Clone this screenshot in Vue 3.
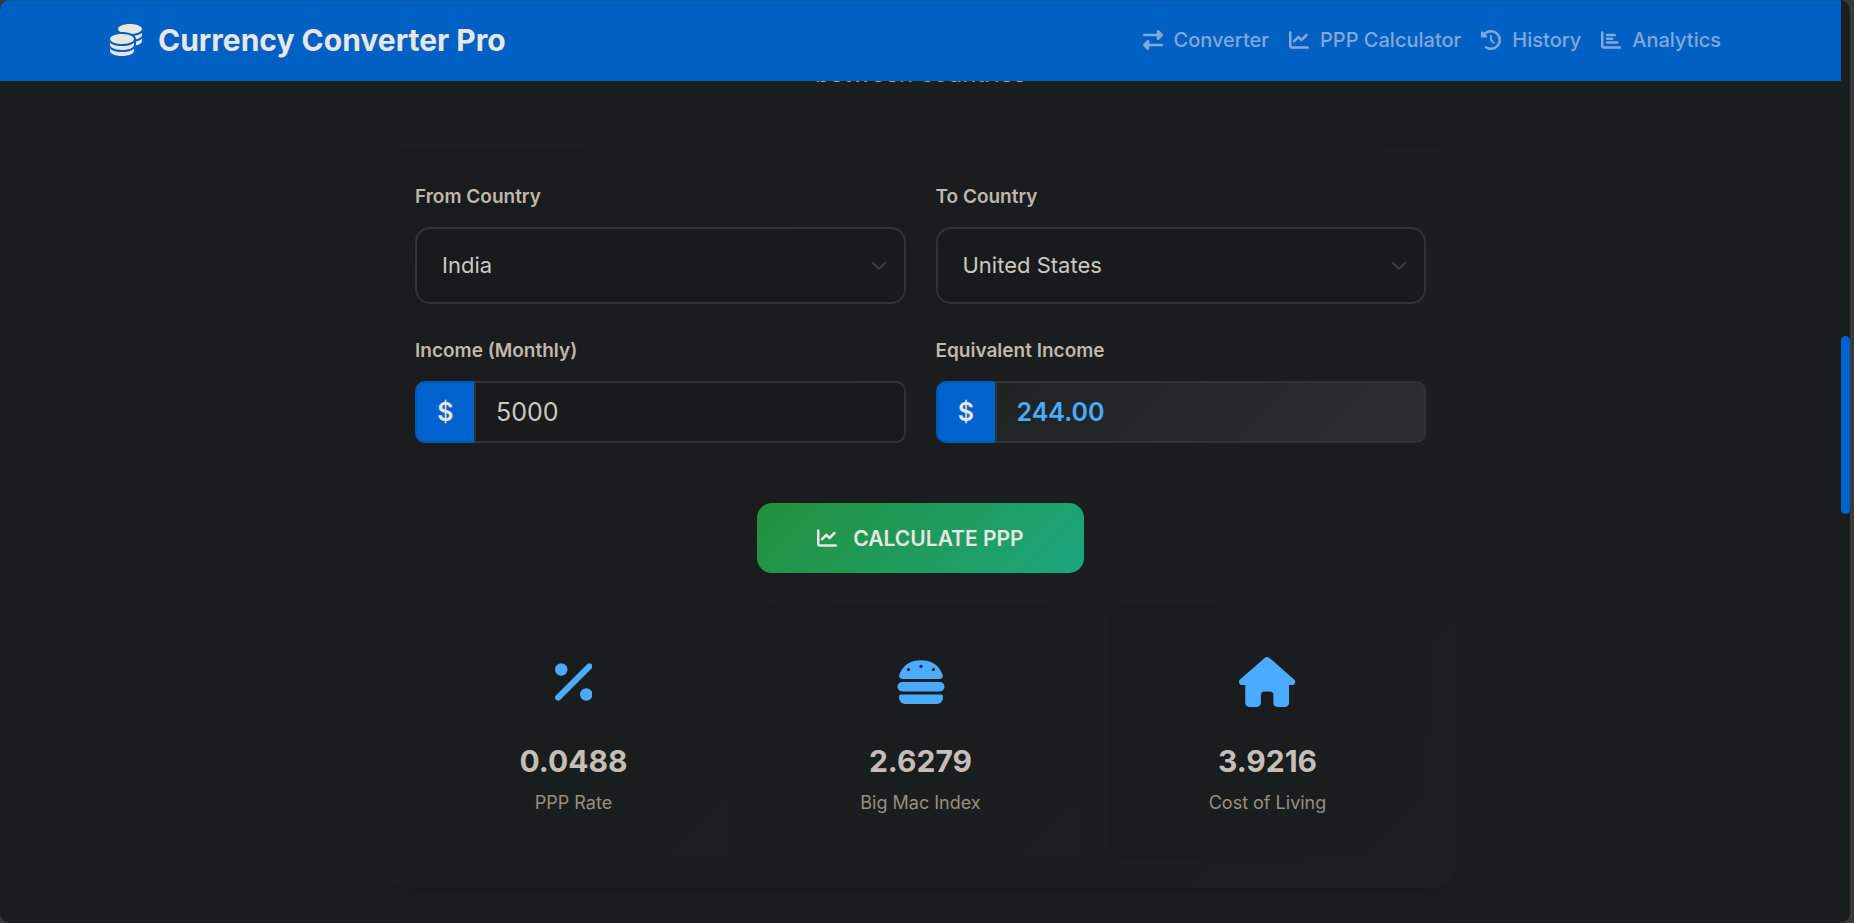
<script setup>
import { ref } from 'vue'

const icons = {
  coins: { box: '0 0 512 512', d: 'M512 80c0 18-14.3 34.6-38.4 48c-29.1 16.1-72.5 27.5-122.3 30.9c-3.7-1.8-7.4-3.5-11.3-5C300.6 137.4 248.2 128 192 128c-8.3 0-16.4 .2-24.5 .6l-1.1-.6C142.3 114.6 128 98 128 80c0-44.2 86-80 192-80S512 35.8 512 80zM160.7 161.1c10.2-.7 20.7-1.1 31.3-1.1c62.2 0 117.4 12.3 152.5 31.4C369.3 204.9 384 221.7 384 240c0 4-.7 7.9-2.1 11.7c-4.6 13.2-17 25.3-35 35.5c-.1 .1-.3 .1-.4 .2c-.3 .2-.6 .3-.9 .5c-35 19.4-90.8 32-153.6 32c-59.6 0-112.9-11.3-148.2-29.1c-1.9-.9-3.7-1.9-5.5-2.9C14.3 274.6 0 258 0 240c0-34.8 53.4-64.5 128-75.4c10.5-1.5 21.4-2.7 32.7-3.5zM416 240c0-21.9-10.6-39.9-24.1-53.4c28.3-4.4 54.2-11.4 76.2-20.5c16.3-6.8 31.5-15.2 43.9-25.5l0 35.4c0 19.3-16.5 37.1-43.8 50.9c-14.6 7.4-32.4 13.7-52.4 18.5c.1-1.8 .2-3.5 .2-5.3zm-32 96c0 18-14.3 34.6-38.4 48c-1.8 1-3.6 1.9-5.5 2.9C304.9 404.7 251.6 416 192 416c-62.8 0-118.6-12.6-153.6-32C14.3 370.6 0 354 0 336l0-35.4c12.5 10.3 27.6 18.7 43.9 25.5C83.4 342.6 135.8 352 192 352s108.6-9.4 148.1-25.9c7.8-3.2 15.3-6.9 22.4-10.9c6.1-3.4 11.8-7.2 17.2-11.2c1.5-1.1 2.9-2.3 4.3-3.4l0 35.4zm32 0l0-57.9c19-4.2 36.5-9.5 52.1-16c16.3-6.8 31.5-15.2 43.9-25.5l0 35.4c0 10.5-5 21-14.9 30.9c-16.3 16.3-45 29.7-81.3 38.4c.1-1.7 .2-3.5 .2-5.3zM192 448c56.2 0 108.6-9.4 148.1-25.9c16.3-6.8 31.5-15.2 43.9-25.5l0 35.4c0 44.2-86 80-192 80S0 476.2 0 432l0-35.4c12.5 10.3 27.6 18.7 43.9 25.5C83.4 438.6 135.8 448 192 448z' },
  exchange: { box: '0 0 512 512', d: 'M32 96l320 0 0-64c0-12.9 7.8-24.6 19.8-29.6s25.7-2.2 34.9 6.9l96 96c6 6 9.4 14.1 9.4 22.6s-3.4 16.6-9.4 22.6l-96 96c-9.2 9.2-22.9 11.9-34.9 6.9s-19.8-16.6-19.8-29.6l0-64L32 160c-17.7 0-32-14.3-32-32s14.3-32 32-32zM480 352c17.7 0 32 14.3 32 32s-14.3 32-32 32l-320 0 0 64c0 12.9-7.8 24.6-19.8 29.6s-25.7 2.2-34.9-6.9l-96-96c-6-6-9.4-14.1-9.4-22.6s3.4-16.6 9.4-22.6l96-96c9.2-9.2 22.9-11.9 34.9-6.9s19.8 16.6 19.8 29.6l0 64 320 0z' },
  line: { box: '0 0 512 512', d: 'M64 64c0-17.7-14.3-32-32-32S0 46.3 0 64L0 400c0 44.2 35.8 80 80 80l400 0c17.7 0 32-14.3 32-32s-14.3-32-32-32L80 416c-8.8 0-16-7.2-16-16L64 64zm406.6 86.6c12.5-12.5 12.5-32.8 0-45.3s-32.8-12.5-45.3 0L320 210.7l-57.4-57.4c-12.5-12.5-32.8-12.5-45.3 0l-112 112c-12.5 12.5-12.5 32.8 0 45.3s32.8 12.5 45.3 0L240 221.3l57.4 57.4c12.5 12.5 32.8 12.5 45.3 0l128-128z' },
  history: { box: '0 0 512 512', d: 'M75 75L41 41C25.9 25.9 0 36.6 0 57.9L0 168c0 13.3 10.7 24 24 24l110.1 0c21.4 0 32.1-25.9 17-41l-30.8-30.8C155 85.5 203 64 256 64c106 0 192 86 192 192s-86 192-192 192c-40.8 0-78.6-12.7-109.7-34.4c-14.5-10.1-34.4-6.6-44.6 7.9s-6.6 34.4 7.9 44.6C151.2 495 201.7 512 256 512c141.4 0 256-114.6 256-256S397.4 0 256 0C185.3 0 121.3 28.7 75 75zm181 53c-13.3 0-24 10.7-24 24l0 104c0 6.4 2.5 12.5 7 17l72 72c9.4 9.4 24.6 9.4 33.9 0s9.4-24.6 0-33.9l-65-65 0-94.1c0-13.3-10.7-24-24-24z' },
  bar: { box: '0 0 512 512', d: 'M32 32c17.7 0 32 14.3 32 32l0 336c0 8.8 7.2 16 16 16l400 0c17.7 0 32 14.3 32 32s-14.3 32-32 32L80 480c-44.2 0-80-35.8-80-80L0 64C0 46.3 14.3 32 32 32zm96 96c0-17.7 14.3-32 32-32l192 0c17.7 0 32 14.3 32 32s-14.3 32-32 32l-192 0c-17.7 0-32-14.3-32-32zm32 64l128 0c17.7 0 32 14.3 32 32s-14.3 32-32 32l-128 0c-17.7 0-32-14.3-32-32s14.3-32 32-32zm0 96l256 0c17.7 0 32 14.3 32 32s-14.3 32-32 32l-256 0c-17.7 0-32-14.3-32-32s14.3-32 32-32z' },
  percent: { box: '0 0 384 512', d: 'M374.6 118.6c12.5-12.5 12.5-32.8 0-45.3s-32.8-12.5-45.3 0l-320 320c-12.5 12.5-12.5 32.8 0 45.3s32.8 12.5 45.3 0l320-320zM128 128A64 64 0 1 0 0 128a64 64 0 1 0 128 0zM384 384a64 64 0 1 0 -128 0 64 64 0 1 0 128 0z' },
  burger: { box: '0 0 512 512', d: 'M61.1 224C45 224 32 211 32 194.9c0-1.9 .2-3.7 .6-5.6C37.9 168.3 78.8 32 256 32s218.1 136.3 223.4 157.3c.5 1.9 .6 3.7 .6 5.6c0 16.1-13 29.1-29.1 29.1L61.1 224zM144 128a16 16 0 1 0 -32 0 16 16 0 1 0 32 0zm240 16a16 16 0 1 0 0-32 16 16 0 1 0 0 32zM272 96a16 16 0 1 0 -32 0 16 16 0 1 0 32 0zM16 304c0-26.5 21.5-48 48-48l384 0c26.5 0 48 21.5 48 48s-21.5 48-48 48L64 352c-26.5 0-48-21.5-48-48zm16 96c0-8.8 7.2-16 16-16l416 0c8.8 0 16 7.2 16 16l0 16c0 35.3-28.7 64-64 64L96 480c-35.3 0-64-28.7-64-64l0-16z' },
  home: { box: '0 0 576 512', d: 'M575.8 255.5c0 18-15 32.1-32 32.1l-32 0 .7 160.2c0 2.7-.2 5.4-.5 8.1l0 16.2c0 22.1-17.9 40-40 40l-16 0c-1.1 0-2.2 0-3.3-.1c-1.4 .1-2.8 .1-4.2 .1L416 512l-24 0c-22.1 0-40-17.9-40-40l0-24 0-64c0-17.7-14.3-32-32-32l-64 0c-17.7 0-32 14.3-32 32l0 64 0 24c0 22.1-17.9 40-40 40l-24 0-31.9 0c-1.5 0-3-.1-4.5-.2c-1.2 .1-2.4 .2-3.6 .2l-16 0c-22.1 0-40-17.9-40-40l0-112c0-.9 0-1.9 .1-2.8l0-69.7-32 0c-18 0-32-14-32-32.1c0-9 3-17 10-24L266.4 8c7-7 15-8 22-8s15 2 21 7L564.8 231.5c8 7 12 15 11 24z' },
}

const links = [
  { label: 'Converter', icon: 'exchange' },
  { label: 'PPP Calculator', icon: 'line' },
  { label: 'History', icon: 'history' },
  { label: 'Analytics', icon: 'bar' },
]
const countries = ['India', 'United States']
const stats = [
  { label: 'PPP Rate', value: '0.0488', icon: 'percent' },
  { label: 'Big Mac Index', value: '2.6279', icon: 'burger' },
  { label: 'Cost of Living', value: '3.9216', icon: 'home' },
]

const from = ref('India')
const to = ref('United States')
const income = ref('5000')
const result = ref('244.00')

function calculate() {
  const amount = Number(income.value) || 0
  result.value = (amount * 0.0488).toFixed(2)
}
</script>

<template>
  <div class="window">
    <div class="page">
      <header class="topbar">
        <div class="container">
          <a class="brand" href="#">
            <svg class="brand-icon" :viewBox="icons.coins.box" aria-hidden="true"><path :d="icons.coins.d" /></svg>
            Currency Converter Pro
          </a>
          <nav class="nav">
            <a v-for="l in links" :key="l.label" class="nav-link" href="#">
              <svg class="nav-icon" :viewBox="icons[l.icon].box" aria-hidden="true"><path :d="icons[l.icon].d" /></svg>
              {{ l.label }}
            </a>
          </nav>
        </div>
      </header>

      <main class="main">
        <p class="lead">between countries</p>

        <form class="card" @submit.prevent="calculate">
          <div class="fields">
            <div class="field">
              <label for="from">From Country</label>
              <div class="select-wrap">
                <select id="from" v-model="from">
                  <option v-for="c in countries" :key="c">{{ c }}</option>
                </select>
                <svg class="chevron" viewBox="0 0 16 16" aria-hidden="true"><path d="m2 5 6 6 6-6" /></svg>
              </div>
            </div>
            <div class="field">
              <label for="to">To Country</label>
              <div class="select-wrap">
                <select id="to" v-model="to">
                  <option v-for="c in countries" :key="c">{{ c }}</option>
                </select>
                <svg class="chevron" viewBox="0 0 16 16" aria-hidden="true"><path d="m2 5 6 6 6-6" /></svg>
              </div>
            </div>
            <div class="field">
              <label for="income">Income (Monthly)</label>
              <div class="group">
                <span class="addon">$</span>
                <input id="income" v-model="income" type="text" inputmode="decimal" />
              </div>
            </div>
            <div class="field">
              <label for="result">Equivalent Income</label>
              <div class="group">
                <span class="addon">$</span>
                <input id="result" class="result" type="text" :value="result" readonly />
              </div>
            </div>
          </div>

          <button class="calc" type="submit">
            <svg class="calc-icon" :viewBox="icons.line.box" aria-hidden="true"><path :d="icons.line.d" /></svg>
            CALCULATE PPP
          </button>

          <div class="stats">
            <div v-for="s in stats" :key="s.label" class="stat">
              <svg class="stat-icon" :viewBox="icons[s.icon].box" aria-hidden="true"><path :d="icons[s.icon].d" /></svg>
              <div class="stat-value">{{ s.value }}</div>
              <div class="stat-label">{{ s.label }}</div>
            </div>
          </div>
        </form>
      </main>
    </div>
    <div class="scrollbar"><div class="thumb"></div></div>
  </div>
</template>

<style>
body {
  background: #3a3a3a;
}
</style>

<style scoped>
* {
  box-sizing: border-box;
}
.window {
  display: flex;
  height: 100vh;
  margin-right: 4px;
  border-radius: 10px;
  overflow: hidden;
  background: #1b1e1f;
  font-family: Inter, "Liberation Sans", sans-serif;
  color: #c8c3bc;
}
.page {
  flex: 1;
  min-width: 0;
  overflow: hidden;
}
svg {
  display: block;
  fill: currentColor;
}
.topbar {
  position: relative;
  z-index: 1;
  height: 81px;
  background: #0060c4;
  box-shadow: inset 0 1px #0b59ae;
}
.container {
  display: flex;
  align-items: center;
  justify-content: space-between;
  height: 100%;
  max-width: 1651px;
  margin: 0 auto;
  padding: 0 15px;
}
.brand {
  display: flex;
  align-items: center;
  gap: 16px;
  padding-bottom: 1px;
  font-size: 30px;
  font-weight: 700;
  color: #e8e6e3;
  text-decoration: none;
}
.brand-icon {
  width: 32px;
  height: 32px;
}
.nav {
  display: flex;
  padding-bottom: 1px;
}
.nav-link {
  display: flex;
  align-items: center;
  gap: 11px;
  padding: 10px;
  font-size: 20px;
  font-weight: 500;
  color: #80a9d9;
  text-decoration: none;
}
.nav-icon {
  width: 20px;
  height: 20px;
}
.main {
  padding: 0 30px;
}
.lead {
  margin: -22px 0 61px;
  font-size: 24px;
  line-height: 30px;
  text-align: center;
  color: #a89f93;
}
.card {
  display: flex;
  flex-direction: column;
  max-width: 1071px;
  margin: 0 auto;
  padding: 30px;
  border-radius: 20px;
  background: linear-gradient(135deg, #191b1c, #1c1f20);
  box-shadow: 0 10px 30px rgba(0, 0, 0, 0.12);
}
.fields {
  display: grid;
  grid-template-columns: repeat(2, minmax(0, 1fr));
  gap: 30px;
}
.field {
  display: flex;
  flex-direction: column;
  gap: 13px;
}
label {
  font-size: 19px;
  font-weight: 600;
  line-height: 34px;
  color: #bfb8ae;
}
.select-wrap {
  position: relative;
}
select {
  width: 100%;
  height: 77px;
  padding: 0 60px 2px 25px;
  appearance: none;
  border: 2px solid #303436;
  border-radius: 15px;
  background: #181a1b;
  font: 400 22px Inter, "Liberation Sans", sans-serif;
  color: #ccc8c2;
}
.chevron {
  position: absolute;
  top: 50%;
  right: 19px;
  width: 16px;
  height: 16px;
  margin-top: -8px;
  fill: none;
  stroke: #373d43;
  stroke-width: 2;
  stroke-linecap: round;
  stroke-linejoin: round;
  pointer-events: none;
}
.group {
  display: flex;
  height: 62px;
}
.addon {
  display: flex;
  align-items: center;
  justify-content: center;
  width: 59px;
  border: 2px solid #0059b8;
  border-right: 0;
  border-radius: 10px 0 0 10px;
  background: #0062ce;
  font-size: 25px;
  font-weight: 600;
  color: #e8e6e3;
}
input {
  flex: 1;
  min-width: 0;
  padding: 0 20px;
  border: 2px solid #303436;
  border-radius: 0 10px 10px 0;
  background: #181a1b;
  font: 400 25px Inter, "Liberation Sans", sans-serif;
  color: #ccc8c2;
}
.result {
  background: linear-gradient(135deg, #1f2324, #2b2f31);
  font-weight: 600;
  color: #4aabff;
}
.calc {
  display: flex;
  align-items: center;
  align-self: center;
  gap: 16px;
  height: 70px;
  margin: 60px 0 30px;
  padding: 0 60px;
  border: 0;
  border-radius: 15px;
  background: linear-gradient(135deg, #23903a, #1ba67e);
  font: 600 21px Inter, "Liberation Sans", sans-serif;
  color: #e8e6e3;
}
.calc-icon {
  width: 20px;
  height: 20px;
}
.stats {
  display: grid;
  grid-template-columns: repeat(3, minmax(0, 1fr));
  gap: 30px;
}
.stat {
  display: flex;
  flex-direction: column;
  align-items: center;
  padding: 54px 20px 41px;
  border-radius: 15px;
  background: linear-gradient(135deg, #191b1c, #1b1f20);
}
.stat-icon {
  height: 50px;
  color: #4aabff;
}
.stat-value {
  margin: 36px 0 10px;
  font-size: 30px;
  font-weight: 700;
  line-height: 36px;
  color: #c5beb6;
}
.stat-label {
  font-size: 18px;
  line-height: 28px;
  color: #988f81;
}
.scrollbar {
  display: grid;
  grid-template-rows: 336fr 178fr 409fr;
  width: 9px;
}
.thumb {
  grid-row: 2;
  border-radius: 5px;
  background: #0062ce;
}
</style>
